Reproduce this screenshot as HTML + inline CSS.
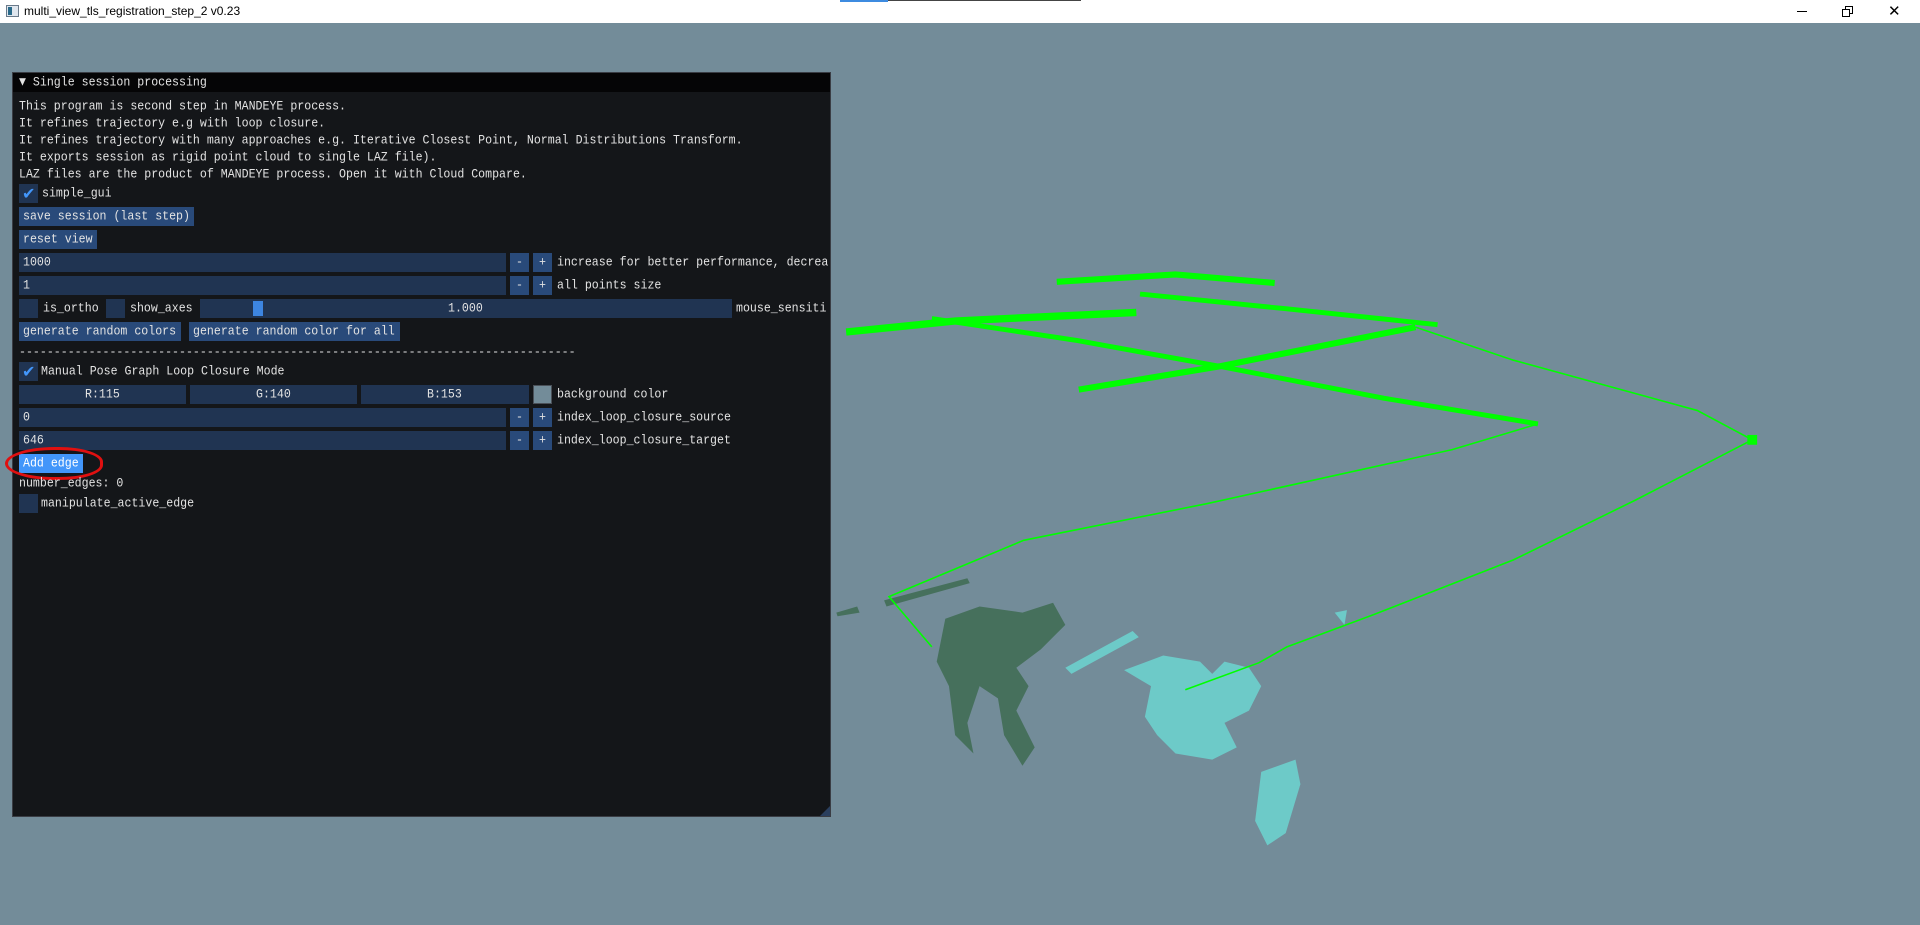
<!DOCTYPE html>
<html><head><style>
*{margin:0;padding:0;box-sizing:border-box}
body{width:1920px;height:925px;overflow:hidden;background:#738c99;position:relative;font-family:"Liberation Mono",monospace;}
.tb{position:absolute;left:0;top:0;width:1920px;height:23px;background:#fff;font-family:"Liberation Sans",sans-serif;font-size:12px;color:#000}
.a{position:absolute}
.t{position:absolute;color:#e2e2e2;font-size:11.6px;line-height:19px;white-space:nowrap;transform:scaleY(1.15);transform-origin:left center}
.f{position:absolute;background:#203452;height:19px}
.b{position:absolute;background:#294a7a;height:19px}
</style></head><body>
<div class="tb">
<div class="a" style="left:6px;top:5px;width:13px;height:12px;border:1px solid #6a7a8a;background:#dfe6ee"><div class="a" style="left:1px;top:1px;width:4px;height:8px;background:#2a6a8a"></div></div>
<div class="a" style="left:24px;top:4px">multi_view_tls_registration_step_2 v0.23</div>
<div class="a" style="left:1797px;top:11px;width:10px;height:1px;background:#000"></div>
<div class="a" style="left:1845px;top:6px;width:8px;height:8px;border:1px solid #000"></div>
<div class="a" style="left:1842px;top:9px;width:8px;height:8px;border:1px solid #000;background:#fff"></div>
<div class="a" style="left:1888px;top:2px;font-size:15px">✕</div>
</div>
<div class="a" style="left:840px;top:0;width:48px;height:2px;background:#3d8be0"></div>
<div class="a" style="left:888px;top:0;width:193px;height:1px;background:#444"></div>

<svg class="a" style="left:0;top:0" width="1920" height="925" viewBox="0 0 1568 755" preserveAspectRatio="none">
<g fill="#46705c">
<path d="M772 505 L800 495 L835 500 L860 492 L870 510 L850 530 L830 545 L840 560 L830 580 L845 610 L835 625 L820 600 L815 570 L800 560 L790 590 L795 615 L780 600 L775 560 L765 540 Z"/>
<path d="M722 490 L790 472 L792 476 L724 495 Z"/>
<path d="M683 500 L700 495 L702 500 L684 503 Z"/>
</g>
<g fill="#6dcac8">
<path d="M918 547 L950 535 L980 540 L990 550 L1000 540 L1020 545 L1030 560 L1020 580 L1000 590 L1010 610 L990 620 L960 615 L945 600 L935 585 L940 560 Z"/>
<path d="M870 545 L925 515 L930 520 L875 550 Z"/>
<path d="M1030 630 L1058 620 L1062 640 L1050 680 L1035 690 L1025 670 Z"/>
<path d="M1090 500 L1100 498 L1098 510 Z"/>
</g>
<g fill="none" stroke="#00ff00">
<path d="M863 230 L960 224 L1041 231" stroke-width="5"/>
<path d="M931 240 L1050 252 L1174 265" stroke-width="4"/>
<path d="M691 271 L780 262 L928 255" stroke-width="6"/>
<path d="M761 260 L880 278 L996 299 L1130 325 L1256 346" stroke-width="4"/>
<path d="M881 318 L996 299 L1156 267" stroke-width="5"/>
<path d="M1156 267 L1236 294 L1386 335 L1431 359" stroke-width="1.3"/>
<path d="M761 528 L726 487 L836 441 L986 411 L1086 389 L1186 367 L1256 346" stroke-width="1.3"/>
<path d="M968 563 L1028 541 L1051 528 L1121 502 L1236 457 L1336 408 L1431 359" stroke-width="1.3"/>
</g>
<rect x="1427" y="355" width="8" height="8" fill="#00ff00"/>
</svg>

<div class="a" style="left:12px;top:72px;width:819px;height:745px;background:#141619;border:1px solid #3a3d44"></div>
<div class="a" style="left:13px;top:73px;width:817px;height:19px;background:#050506"></div>
<div class="t" style="left:19px;top:73px">▼ Single session processing</div>
<div class="t" style="left:19px;top:97px">This program is second step in MANDEYE process.</div>
<div class="t" style="left:19px;top:114px">It refines trajectory e.g with loop closure.</div>
<div class="t" style="left:19px;top:131px">It refines trajectory with many approaches e.g. Iterative Closest Point, Normal Distributions Transform.</div>
<div class="t" style="left:19px;top:148px">It exports session as rigid point cloud to single LAZ file).</div>
<div class="t" style="left:19px;top:165px">LAZ files are the product of MANDEYE process. Open it with Cloud Compare.</div>

<div class="f" style="left:19px;top:184px;width:19px"></div><div class="a" style="left:22px;top:184px;color:#4296fa;font-size:16px;font-family:'DejaVu Sans'">✔</div>
<div class="t" style="left:42px;top:184px">simple_gui</div>
<div class="b" style="left:19px;top:207px;width:175px"></div><div class="t" style="left:23px;top:207px">save session (last step)</div>
<div class="b" style="left:19px;top:230px;width:78px"></div><div class="t" style="left:23px;top:230px">reset view</div>

<div class="f" style="left:19px;top:253px;width:487px"></div><div class="t" style="left:23px;top:253px">1000</div>
<div class="b" style="left:510px;top:253px;width:19px"></div><div class="t" style="left:516px;top:253px">-</div>
<div class="b" style="left:533px;top:253px;width:19px"></div><div class="t" style="left:539px;top:253px">+</div>
<div class="t" style="left:557px;top:253px">increase for better performance, decrea</div>

<div class="f" style="left:19px;top:276px;width:487px"></div><div class="t" style="left:23px;top:276px">1</div>
<div class="b" style="left:510px;top:276px;width:19px"></div><div class="t" style="left:516px;top:276px">-</div>
<div class="b" style="left:533px;top:276px;width:19px"></div><div class="t" style="left:539px;top:276px">+</div>
<div class="t" style="left:557px;top:276px">all points size</div>

<div class="f" style="left:19px;top:299px;width:19px"></div><div class="t" style="left:43px;top:299px">is_ortho</div>
<div class="f" style="left:106px;top:299px;width:19px"></div><div class="t" style="left:130px;top:299px">show_axes</div>
<div class="f" style="left:200px;top:299px;width:532px"></div>
<div class="a" style="left:253px;top:301px;width:10px;height:15px;background:#3d85e0"></div>
<div class="t" style="left:448px;top:299px">1.000</div>
<div class="t" style="left:736px;top:299px">mouse_sensiti</div>

<div class="b" style="left:19px;top:322px;width:162px"></div><div class="t" style="left:23px;top:322px">generate random colors</div>
<div class="b" style="left:189px;top:322px;width:211px"></div><div class="t" style="left:193px;top:322px">generate random color for all</div>
<div class="t" style="left:19px;top:343px">--------------------------------------------------------------------------------</div>

<div class="f" style="left:19px;top:362px;width:19px"></div><div class="a" style="left:22px;top:362px;color:#4296fa;font-size:16px;font-family:'DejaVu Sans'">✔</div>
<div class="t" style="left:41px;top:362px">Manual Pose Graph Loop Closure Mode</div>

<div class="f" style="left:19px;top:385px;width:167px"></div><div class="t" style="left:85px;top:385px">R:115</div>
<div class="f" style="left:190px;top:385px;width:167px"></div><div class="t" style="left:256px;top:385px">G:140</div>
<div class="f" style="left:361px;top:385px;width:168px"></div><div class="t" style="left:427px;top:385px">B:153</div>
<div class="a" style="left:533px;top:385px;width:19px;height:19px;background:#738c99;border:1px solid #4a5058"></div>
<div class="t" style="left:557px;top:385px">background color</div>

<div class="f" style="left:19px;top:408px;width:487px"></div><div class="t" style="left:23px;top:408px">0</div>
<div class="b" style="left:510px;top:408px;width:19px"></div><div class="t" style="left:516px;top:408px">-</div>
<div class="b" style="left:533px;top:408px;width:19px"></div><div class="t" style="left:539px;top:408px">+</div>
<div class="t" style="left:557px;top:408px">index_loop_closure_source</div>

<div class="f" style="left:19px;top:431px;width:487px"></div><div class="t" style="left:23px;top:431px">646</div>
<div class="b" style="left:510px;top:431px;width:19px"></div><div class="t" style="left:516px;top:431px">-</div>
<div class="b" style="left:533px;top:431px;width:19px"></div><div class="t" style="left:539px;top:431px">+</div>
<div class="t" style="left:557px;top:431px">index_loop_closure_target</div>

<div class="a" style="left:19px;top:454px;width:64px;height:19px;background:#4296fa"></div><div class="t" style="left:23px;top:454px;color:#fff">Add edge</div>
<div class="a" style="left:5px;top:447px;width:98px;height:33px;border:3px solid #e01010;border-radius:50% 45% 45% 50%"></div>
<div class="t" style="left:19px;top:474px">number_edges: 0</div>
<div class="f" style="left:19px;top:494px;width:19px"></div><div class="t" style="left:41px;top:494px">manipulate_active_edge</div>
<div class="a" style="left:820px;top:806px;width:0;height:0;border-left:10px solid transparent;border-bottom:10px solid #2a3f5e"></div>
</body></html>
